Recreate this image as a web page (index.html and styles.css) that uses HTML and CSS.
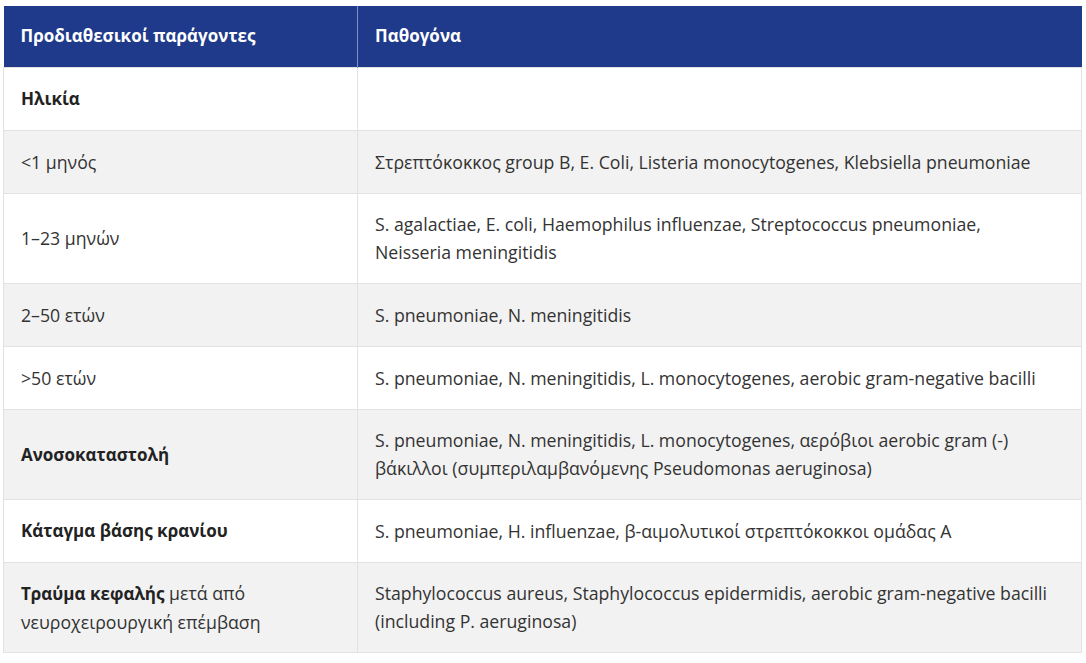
FILE: index.html
```html
<!DOCTYPE html>
<html lang="el">
<head>
<meta charset="utf-8">
<title>Παθογόνα</title>
<link rel="stylesheet" href="styles.css">
</head>
<body>
<table class="pathogens">
  <colgroup>
    <col class="col-factor">
    <col class="col-pathogen">
  </colgroup>
  <thead>
    <tr>
      <th>Προδιαθεσικοί παράγοντες</th>
      <th>Παθογόνα</th>
    </tr>
  </thead>
  <tbody>
    <tr class="row-1">
      <td><strong>Ηλικία</strong></td>
      <td></td>
    </tr>
    <tr class="row-1">
      <td>&lt;1 μηνός</td>
      <td>Στρεπτόκοκκος group B, E. Coli, Listeria monocytogenes, Klebsiella pneumoniae</td>
    </tr>
    <tr class="row-2">
      <td>1–23 μηνών</td>
      <td>S. agalactiae, E. coli, Haemophilus influenzae, Streptococcus pneumoniae,<br>Neisseria meningitidis</td>
    </tr>
    <tr class="row-1">
      <td>2–50 ετών</td>
      <td>S. pneumoniae, N. meningitidis</td>
    </tr>
    <tr class="row-1">
      <td>&gt;50 ετών</td>
      <td>S. pneumoniae, N. meningitidis, L. monocytogenes, aerobic gram-negative bacilli</td>
    </tr>
    <tr class="row-2">
      <td><strong>Ανοσοκαταστολή</strong></td>
      <td>S. pneumoniae, N. meningitidis, L. monocytogenes, αερόβιοι aerobic gram (-)<br>βάκιλλοι (συμπεριλαμβανόμενης Pseudomonas aeruginosa)</td>
    </tr>
    <tr class="row-1">
      <td><strong>Κάταγμα βάσης κρανίου</strong></td>
      <td>S. pneumoniae, H. influenzae, β-αιμολυτικοί στρεπτόκοκκοι ομάδας A</td>
    </tr>
    <tr class="row-2">
      <td><strong>Τραύμα κεφαλής</strong> μετά από<br>νευροχειρουργική επέμβαση</td>
      <td>Staphylococcus aureus, Staphylococcus epidermidis, aerobic gram-negative bacilli<br>(including P. aeruginosa)</td>
    </tr>
  </tbody>
</table>
</body>
</html>
```
FILE: styles.css
```css
html, body {
  margin: 0;
  padding: 0;
  background: #ffffff;
}

body {
  font-family: "Open Sans", "Noto Sans", sans-serif;
  font-size: 17.7px;
  color: #333333;
}

.pathogens {
  margin: 6px 0 0 3px;
  width: 1079px;
  border-collapse: collapse;
  table-layout: fixed;
}

.col-factor {
  width: 354px;
}

.pathogens th {
  background: #1f3a8a;
  color: #ffffff;
  font-size: 17px;
  font-weight: 700;
  text-align: left;
  height: 61px;
  padding: 0 17px;
  box-sizing: border-box;
  vertical-align: middle;
  line-height: 28px;
}

.pathogens th + th {
  border-left: 1px solid #8193c2;
}

.pathogens td {
  border: 1px solid #e2e2e2;
  padding: 0 17px;
  vertical-align: middle;
  line-height: 28px;
}

.pathogens tr.row-1 td {
  height: 62px;
}

.pathogens tr.row-2 td {
  height: 89px;
}

.pathogens tbody tr:nth-child(even) td {
  background: #f2f2f2;
}

.pathogens strong {
  font-size: 17px;
  font-weight: 700;
  color: #222222;
}
```
